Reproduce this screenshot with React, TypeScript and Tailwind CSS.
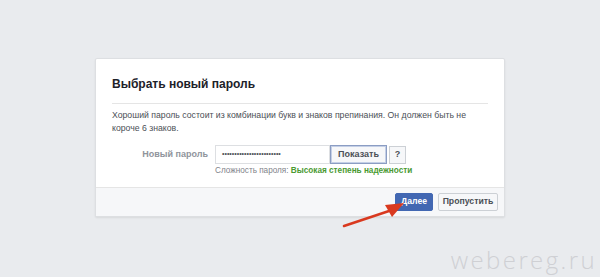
export default function App() {
  return (
    <div className="relative w-[600px] h-[277px] overflow-hidden bg-[#e9ebee] pt-[58px] font-['Liberation_Sans',Arial,sans-serif]">
      <div className="ml-[95px] w-[410px] bg-white border border-[#dddfe2] rounded-[2px] shadow-[0_1px_2px_rgba(0,0,0,0.08)]">
        <div className="px-4 pt-[17px]">
          <h2 className="text-[12px] leading-[16px] font-bold text-[#1d2129] pb-[11px] border-b border-[#e5e5e5]">
            Выбрать новый пароль
          </h2>
          <p className="mt-[5px] text-[8.7px] leading-[13px] text-[#4b4f56]">
            Хороший пароль состоит из комбинации букв и знаков препинания. Он должен быть не короче 6 знаков.
          </p>
          <div className="mt-[10px] flex items-center">
            <span className="w-[103px] pr-[7px] text-right text-[9px] font-bold text-[#90949c]">Новый пароль</span>
            <div className="w-[115px] h-[19px] border border-[#dddfe2] flex items-center pl-[6px] text-[7px] text-[#4b4f56]">
              ••••••••••••••••••••••••
            </div>
            <button className="h-[19px] w-[57px] border border-[#8b9dc3] bg-[#f6f7f9] text-[9px] font-bold text-[#4b4f56] shadow-[inset_0_0_0_1px_#c4cfe6]">
              Показать
            </button>
            <button className="ml-[2px] h-[18px] w-[17px] border border-[#ccd0d5] bg-[#f6f7f9] text-[9px] font-bold text-[#4b4f56]">
              ?
            </button>
          </div>
          <div className="ml-[103px] pb-[10px] text-[8.2px] leading-[13px] text-[#7f838a]">
            Сложность пароля: <span className="font-bold text-[#4a9a32]">Высокая степень надежности</span>
          </div>
        </div>
        <div className="flex justify-end gap-[5px] border-t border-[#e5e5e5] bg-[#f6f7f9] px-[6px] py-[5px]">
          <button className="h-[18px] w-[38px] bg-[#4267b2] border border-[#4267b2] text-white text-[8.7px] font-bold rounded-[2px]">
            Далее
          </button>
          <button className="h-[18px] w-[60px] bg-[#f6f7f9] border border-[#ccd0d5] text-[#4b4f56] text-[8.7px] font-bold rounded-[2px]">
            Пропустить
          </button>
        </div>
      </div>
      <svg className="absolute left-[338px] top-[196px]" width="80" height="36" viewBox="0 0 80 36">
        <line x1="6" y1="30" x2="54" y2="14" stroke="#d9391f" strokeWidth="2.5" strokeLinecap="round" />
        <polygon points="66,7 47,9 54,21" fill="#d9391f" />
      </svg>
      <div className="absolute right-[3px] top-[248px] leading-none text-[24px] font-light tracking-[2.4px] text-[#cfd0d4] font-['Open_Sans',sans-serif]">
        webereg.ru
      </div>
    </div>
  );
}
